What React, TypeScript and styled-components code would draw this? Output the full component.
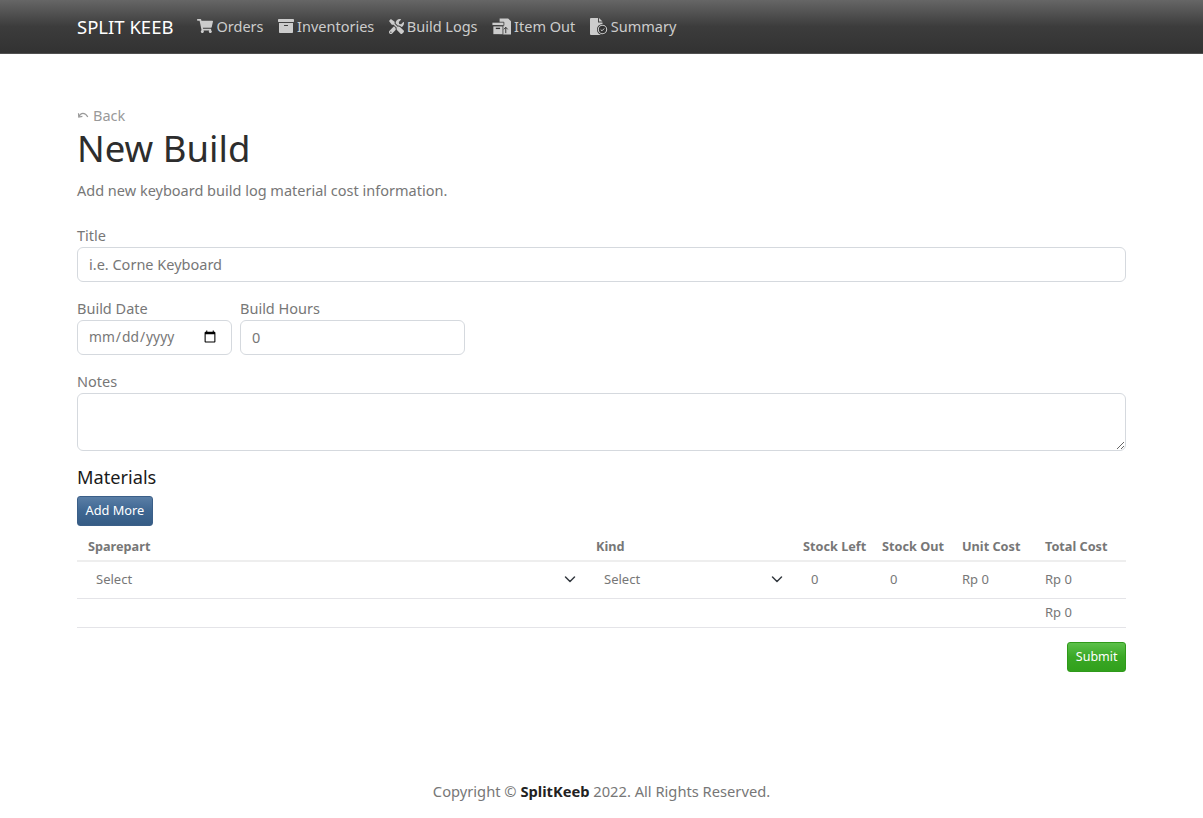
import styled, { createGlobalStyle } from "styled-components";
import { FaShoppingCart, FaArchive, FaTools } from "react-icons/fa";

const FONT = `"Noto Sans", "Open Sans", sans-serif`;

const GlobalStyle = createGlobalStyle`
  * { box-sizing: border-box; }
  body {
    margin: 0;
    background: #fff;
    font-family: ${FONT};
    font-size: 16px;
    color: #777;
  }
`;

function App() {
  return (
    <Page>
      <GlobalStyle />
      <NavBar>
        <Brand>SPLIT KEEB</Brand>
        <NavLink><FaShoppingCart size={16} />Orders</NavLink>
        <NavLink><FaArchive size={16} />Inventories</NavLink>
        <NavLink><FaTools size={15} />Build Logs</NavLink>
        <NavLink><ItemOutIcon />Item Out</NavLink>
        <NavLink><SummaryIcon />Summary</NavLink>
      </NavBar>
      <Main>
        <BackLink><BackIcon />Back</BackLink>
        <Title>New Build</Title>
        <Lead>Add new keyboard build log material cost information.</Lead>
        <Field>
          <Label>Title</Label>
          <Input placeholder="i.e. Corne Keyboard" />
        </Field>
        <Row>
          <Field $width={155}>
            <Label>Build Date</Label>
            <DateInput type="date" />
          </Field>
          <Field $width={225}>
            <Label>Build Hours</Label>
            <Input defaultValue="0" />
          </Field>
        </Row>
        <Field>
          <Label>Notes</Label>
          <TextArea />
        </Field>
        <SectionTitle>Materials</SectionTitle>
        <BlueButton>Add More</BlueButton>
        <Table>
          <thead>
            <tr>
              <Th>Sparepart</Th>
              <Th>Kind</Th>
              <Th>Stock Left</Th>
              <Th>Stock Out</Th>
              <Th>Unit Cost</Th>
              <Th>Total Cost</Th>
            </tr>
          </thead>
          <tbody>
            <tr>
              <Td><SelectText>Select<Chevron /></SelectText></Td>
              <Td><SelectText>Select<Chevron /></SelectText></Td>
              <Td $indent={8}>0</Td>
              <Td $indent={8}>0</Td>
              <Td>Rp 0</Td>
              <Td>Rp 0</Td>
            </tr>
            <tr>
              <FootTd colSpan={5} />
              <FootTd>Rp 0</FootTd>
            </tr>
          </tbody>
        </Table>
        <Actions>
          <GreenButton>Submit</GreenButton>
        </Actions>
      </Main>
      <Footer>Copyright © <strong>SplitKeeb</strong> 2022. All Rights Reserved.</Footer>
    </Page>
  );
}

function Chevron() {
  return (
    <svg width="16" height="16" viewBox="0 0 16 16" fill="none" stroke="#343a40" strokeWidth="1.5" strokeLinecap="round" strokeLinejoin="round">
      <path d="M3.5 6l4.5 4.5 4.5-4.5" />
    </svg>
  );
}

function BackIcon() {
  return (
    <svg width="12" height="10" viewBox="0 0 12 10" fill="none" stroke="#999" strokeWidth="1.2">
      <path d="M2 6.5C3.5 2.5 8 2 10.8 7" />
      <path d="M1.5 3.2L1.8 7l3.6-.6" />
    </svg>
  );
}

function ItemOutIcon() {
  return (
    <svg width="19" height="17" viewBox="0 0 20 17">
      <path d="M8 0h9l3 3v14H8z" fill="#ccc" />
      <path d="M14.5 15.5v-6M12.5 11.5l2-2.2 2 2.2" fill="none" stroke="#333" strokeWidth="1" />
      <path d="M0 4h12.5v3.5H0z" fill="#ccc" stroke="#333" strokeWidth=".8" />
      <path d="M1 8h10.5v9H1z" fill="#ccc" stroke="#333" strokeWidth=".8" />
      <path d="M4 10.5h4.5" stroke="#333" strokeWidth="1.4" />
    </svg>
  );
}

function SummaryIcon() {
  return (
    <svg width="18" height="17" viewBox="0 0 18 17">
      <path d="M0 1a1 1 0 011-1h7v4.500h4.500V17H1a1 1 0 01-1-1z" fill="#ccc" />
      <path d="M9 0l3.500 3.500H9z" fill="#ccc" />
      <circle cx="12.500" cy="11.500" r="5.500" fill="#333" />
      <circle cx="12.500" cy="11.500" r="4.200" fill="none" stroke="#ccc" strokeWidth="1.100" />
      <path d="M10.700 11.500l1.300 1.300 2.200-2.300" fill="none" stroke="#ccc" strokeWidth="1" />
    </svg>
  );
}

const Page = styled.div`
  min-height: 818px;
  display: flex;
  flex-direction: column;
`;

const NavBar = styled.nav`
  height: 54px;
  padding: 0 77px 1px;
  display: flex;
  align-items: center;
  gap: 14.5px;
  background: linear-gradient(#666, #3c3c3c 50%, #323232);
  border-bottom: 1px solid #505050;
`;

const Brand = styled.div`
  font-size: 18.5px;
  color: #fff;
  margin-right: 9.5px;
`;

const NavLink = styled.a`
  display: flex;
  align-items: center;
  gap: 3px;
  font-size: 14.5px;
  color: #ccc;
`;

const Main = styled.main`
  padding: 51px 77px 0;
  display: flex;
  flex-direction: column;
`;

const BackLink = styled.a`
  display: flex;
  align-items: center;
  gap: 4px;
  font-size: 14.5px;
  line-height: 20px;
  color: #999;
`;

const Title = styled.h1`
  margin: 0;
  font-size: 36.5px;
  font-weight: 400;
  line-height: 46px;
  color: #2d2d2d;
`;

const Lead = styled.p`
  margin: 7px 0 22px;
  font-size: 14.5px;
  line-height: 24px;
`;

const Field = styled.div<{ $width?: number }>`
  display: flex;
  flex-direction: column;
  width: ${(p) => (p.$width ? `${p.$width}px` : "100%")};
  margin-bottom: 15px;
`;

const Row = styled.div`
  display: flex;
  gap: 8px;
`;

const Label = styled.label`
  font-size: 14.5px;
  line-height: 23px;
  height: 23px;
`;

const Input = styled.input`
  height: 35px;
  padding: 0 11px 2px;
  border: 1px solid #d5d9de;
  border-radius: 6px;
  font-family: ${FONT};
  font-size: 14.5px;
  color: #777;
  &::placeholder { color: #777; }
`;

const DateInput = styled(Input)`
  font-size: 13.8px;
  padding-left: 10px;
  padding-right: 12px;
`;

const TextArea = styled.textarea`
  height: 58px;
  padding: 6px 12px;
  border: 1px solid #d5d9de;
  border-radius: 6px;
  font-family: ${FONT};
`;

const SectionTitle = styled.h2`
  margin: 0 0 8px;
  font-size: 18.2px;
  font-weight: 400;
  line-height: 22px;
  color: #1a1a1a;
`;

const BlueButton = styled.button`
  align-self: flex-start;
  height: 30px;
  padding: 0 7.5px 2px;
  border: 1px solid #3b5f88;
  border-radius: 3px;
  background: linear-gradient(#5a7ea6, #3f6792 50%, #365c85);
  color: #fff;
  font-family: ${FONT};
  font-size: 12.8px;
`;

const Table = styled.table`
  width: 100%;
  margin-top: 1px;
  border-collapse: collapse;
  table-layout: fixed;
  font-size: 13px;
`;

const Th = styled.th`
  height: 34px;
  padding: 4px 0 0 11px;
  text-align: left;
  font-size: 12.7px;
  font-weight: 700;
  white-space: nowrap;
  border-bottom: 2px solid #eee;
  &:nth-child(1) { width: 508px; }
  &:nth-child(2) { width: 207px; }
  &:nth-child(3) { width: 79px; }
  &:nth-child(4) { width: 80px; }
  &:nth-child(5) { width: 83px; }
`;

const Td = styled.td<{ $indent?: number }>`
  height: 37px;
  padding: 0 11px 2px ${(p) => 11 + (p.$indent ?? 0)}px;
  border-bottom: 1px solid #e4e4e8;
`;

const FootTd = styled.td`
  height: 29px;
  padding: 0 11px 2px;
  border-bottom: 1px solid #e4e4e8;
`;

const SelectText = styled.div`
  display: flex;
  justify-content: space-between;
  align-items: center;
  padding-left: 8px;
  margin-right: -4px;
`;

const Actions = styled.div`
  display: flex;
  justify-content: flex-end;
  margin-top: 14px;
`;

const GreenButton = styled.button`
  height: 30px;
  padding: 0 7.5px;
  border: 1px solid #2f9a1a;
  border-radius: 3px;
  background: linear-gradient(#5cc04a, #3aa825 50%, #31a01c);
  color: #fff;
  font-family: ${FONT};
  font-size: 12.5px;
`;

const Footer = styled.footer`
  margin-top: 107px;
  text-align: center;
  font-size: 14.7px;
  line-height: 24px;
  strong { color: #222; }
`;

export default App;
